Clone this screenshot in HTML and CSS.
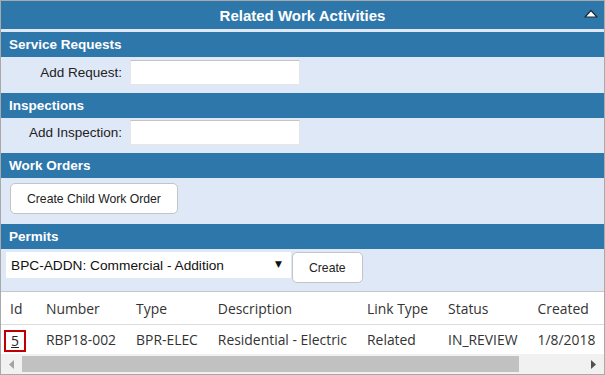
FILE: index.html
```html
<!DOCTYPE html>
<html lang="en">
<head>
<meta charset="UTF-8">
<meta name="viewport" content="width=device-width, initial-scale=1.0">
<title>Related Work Activities</title>
<link rel="stylesheet" href="styles.css">
</head>
<body>
<div class="panel">
  <div class="panel-title">
    <h2>Related Work Activities</h2>
    <svg class="collapse-icon" width="14" height="9" viewBox="0 0 14 9">
      <polygon points="1,8 7,1.5 13,8" fill="#fff" stroke="#1d2a36" stroke-width="1.2" stroke-linejoin="round"/>
    </svg>
  </div>

  <!-- Service Requests -->
  <div class="group">
    <h3 class="group-head">Service Requests</h3>
    <div class="field-row">
      <label for="add-request">Add Request:</label>
      <input type="text" id="add-request">
    </div>
  </div>

  <!-- Inspections -->
  <div class="group">
    <h3 class="group-head">Inspections</h3>
    <div class="field-row">
      <label for="add-inspection">Add Inspection:</label>
      <input type="text" id="add-inspection">
    </div>
  </div>

  <!-- Work Orders -->
  <div class="group">
    <h3 class="group-head">Work Orders</h3>
    <div class="button-row">
      <button class="btn">Create Child Work Order</button>
    </div>
  </div>

  <!-- Permits -->
  <div class="group">
    <h3 class="group-head">Permits</h3>
    <div class="permit-row">
      <div class="select-wrap">
        <select id="permit-type">
          <option>BPC-ADDN: Commercial - Addition</option>
          <option>BPR-ELEC: Residential - Electric</option>
        </select>
      </div>
      <button class="btn btn-create">Create</button>
    </div>
  </div>

  <div class="grid">
    <div class="grid-scroll">
      <table>
        <thead>
          <tr>
            <th>Id</th>
            <th>Number</th>
            <th>Type</th>
            <th>Description</th>
            <th>Link Type</th>
            <th>Status</th>
            <th>Created</th>
          </tr>
        </thead>
        <tbody>
          <tr>
            <td><a href="#" class="id-link">5</a></td>
            <td>RBP18-002</td>
            <td>BPR-ELEC</td>
            <td>Residential - Electric</td>
            <td>Related</td>
            <td>IN_REVIEW</td>
            <td>1/8/2018</td>
          </tr>
        </tbody>
      </table>
    </div>
    <!-- horizontal scrollbar -->
    <div class="hscroll">
      <span class="hscroll-btn">
        <svg width="5" height="9" viewBox="0 0 5 9"><polygon points="5,0 0,4.5 5,9" fill="#a3a3a3"/></svg>
      </span>
      <div class="hscroll-track"><div class="hscroll-thumb"></div></div>
      <span class="hscroll-btn">
        <svg width="5" height="9" viewBox="0 0 5 9"><polygon points="0,0 5,4.5 0,9" fill="#505050"/></svg>
      </span>
    </div>
  </div>
</div>
</body>
</html>
```

FILE: styles.css
```css
:root {
  --bar-blue: #2e77ab;
  --panel-bg: #dfe8f6;
  --border-gray: #a9a9a9;
}

body {
  margin: 0;
  font-family: "Liberation Sans", Arial, sans-serif;
  font-size: 13.5px;
  color: #222;
}

.panel {
  height: 375px;
  box-sizing: border-box;
  border: 1px solid var(--border-gray);
  background: var(--panel-bg);
  overflow: hidden;
}

.panel-title {
  display: grid;
  grid-template-columns: 1fr auto 1fr;
  align-items: center;
  height: 28px;
  margin-bottom: 3px;
  background: var(--bar-blue);
  color: #fff;
}

.panel-title h2 {
  grid-column: 2;
  margin: 0;
  font-size: 15px;
  font-weight: bold;
}

.collapse-icon {
  justify-self: end;
  margin-right: 6px;
  margin-top: -3px;
}

.group-head {
  margin: 0;
  height: 25px;
  line-height: 25px;
  padding-left: 8px;
  background: var(--bar-blue);
  color: #fff;
  font-size: 13.5px;
  font-weight: bold;
}

.field-row {
  display: flex;
  align-items: flex-start;
  gap: 8px;
  padding: 2.5px 0 8px;
}

.field-row label {
  width: 121px;
  line-height: 25px;
  text-align: right;
}

.field-row input {
  width: 170px;
  height: 25px;
  box-sizing: border-box;
  border: 1px solid #e6e6e6;
  border-top-color: #c4c4c4;
  background: #fff;
  padding: 0 4px;
  font: inherit;
}

.btn {
  height: 31px;
  padding: 0 16px;
  border: 1px solid #c4c4c4;
  border-radius: 5px;
  background: #fff;
  color: #222;
  font-family: "Liberation Sans", Arial, sans-serif;
  font-size: 12.2px;
  cursor: pointer;
}

.button-row {
  padding: 5px 0 10px 9px;
}

.permit-row {
  display: flex;
  align-items: flex-start;
  gap: 1px;
  padding: 3px 0 8px 5px;
}

.select-wrap {
  position: relative;
  width: 285px;
}

.select-wrap select {
  width: 100%;
  height: 26px;
  appearance: none;
  border: none;
  background: #fff;
  padding: 0 5px;
  color: #111;
  font-family: "Liberation Sans", Arial, sans-serif;
  font-size: 13.7px;
}

.select-wrap::after {
  content: "\25BC";
  position: absolute;
  right: 9px;
  top: 7px;
  font-family: "DejaVu Sans", sans-serif;
  font-size: 9px;
  color: #111;
  pointer-events: none;
}

.btn-create {
  padding: 0 16px;
}

.grid {
  background: #fff;
  border-top: 1px solid #c6c6c6;
}

.grid-scroll {
  overflow: hidden;
}

table {
  border-collapse: separate;
  border-spacing: 0;
  font-family: "Open Sans", sans-serif;
  font-size: 13.9px;
  color: #333;
  white-space: nowrap;
}

th {
  font-weight: normal;
  text-align: left;
  line-height: 31px;
  padding: 1px 10px 0;
  border-bottom: 1px solid #dcdcdc;
}

td {
  line-height: 29px;
  padding: 0 10px;
}

th:first-child,
td:first-child {
  width: 14px;
  padding-left: 9px;
}

.id-link {
  display: inline-block;
  margin-left: -6px;
  padding: 0 5px;
  line-height: 18px;
  border: 2px solid #c00000;
  color: #222;
  vertical-align: middle;
}

.hscroll {
  display: flex;
  height: 21px;
  background: #f1f1f1;
}

.hscroll-btn {
  display: flex;
  align-items: center;
  justify-content: center;
  width: 21px;
}

.hscroll-track {
  flex: 1;
  padding: 2px 0 3px;
}

.hscroll-thumb {
  width: 497px;
  height: 100%;
  background: #c1c1c1;
}
```
